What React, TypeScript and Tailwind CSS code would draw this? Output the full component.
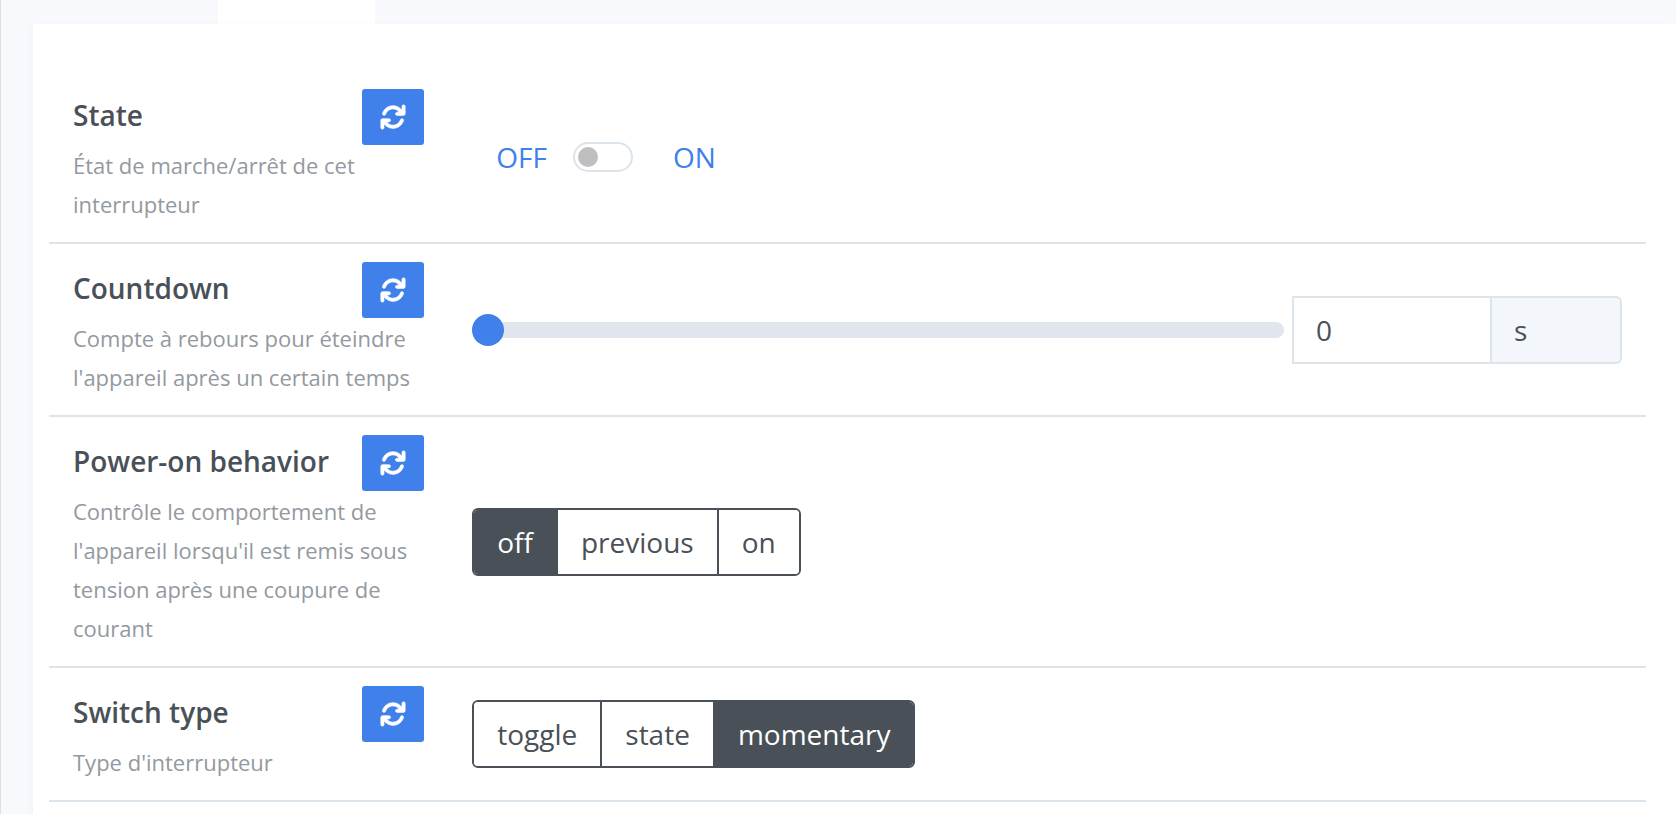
import React, { useState } from "react";

const RefreshIcon: React.FC = () => (
  <svg
    viewBox="0 0 512 512"
    className="size-[26px]"
    fill="currentColor"
    stroke="currentColor"
    strokeWidth="12"
    aria-hidden="true"
  >
    <path d="M464 16c-17.67 0-32 14.31-32 32v74.09C392.1 66.52 327.4 32 256 32C161.5 32 78.59 92.34 49.58 182.2c-5.438 16.81 3.797 34.88 20.61 40.28c16.89 5.5 34.88-3.812 40.3-20.59C130.9 138.5 189.4 96 256 96c50.5 0 96.26 24.55 124.4 64H336c-17.67 0-32 14.31-32 32s14.33 32 32 32h128c17.67 0 32-14.31 32-32V48C496 30.31 481.7 16 464 16z" />
    <path d="M441.8 289.6c-16.92-5.438-34.88 3.812-40.3 20.59C381.1 373.5 322.6 416 256 416c-50.5 0-96.25-24.55-124.4-64H176c17.67 0 32-14.31 32-32s-14.33-32-32-32h-128c-17.67 0-32 14.31-32 32v144c0 17.69 14.33 32 32 32s32-14.31 32-32v-74.09C119.9 445.5 184.6 480 256 480c94.45 0 177.4-60.34 206.4-150.2C467.9 313 458.6 294.1 441.8 289.6z" />
    <path d="M380 160L436 116V190H360zM132 352L76 396V322H152z" />
  </svg>
);

interface FeatureRowProps {
  label: string;
  description: string;
  children: React.ReactNode;
}

const FeatureRow: React.FC<FeatureRowProps> = ({
  label,
  description,
  children,
}) => (
  <div className="flex border-b-2 border-[#dce4ec] py-[18px]">
    <div className="w-1/4 px-6">
      <div className="flex h-[57px] items-start justify-between">
        <h2 className="text-[28px] leading-[52px] font-semibold whitespace-nowrap">
          {label}
        </h2>
        <button
          type="button"
          aria-label={`Refresh ${label}`}
          className="flex h-14 w-[62px] shrink-0 items-center justify-center rounded-[3px] bg-[#4080ea] text-white hover:bg-[#2f70dd]"
        >
          <RefreshIcon />
        </button>
      </div>
      <p className="text-[22px] leading-[39px] text-[#9399a0]">{description}</p>
    </div>
    <div className="flex w-3/4 items-center px-6">{children}</div>
  </div>
);

interface EnumEditorProps {
  label: string;
  values: string[];
  initial: string;
}

const EnumEditor: React.FC<EnumEditorProps> = ({ label, values, initial }) => {
  const [current, setCurrent] = useState<string>(initial);

  return (
    <div
      role="group"
      aria-label={label}
      className="flex overflow-hidden rounded-md border-2 border-[#495057]"
    >
      {values.map((value) => (
        <button
          key={value}
          type="button"
          aria-pressed={value === current}
          onClick={() => setCurrent(value)}
          className={`h-16 border-l-2 border-[#495057] px-[23px] text-[28px] first:border-l-0 ${
            value === current ? "bg-[#495057] text-white" : "bg-white"
          }`}
        >
          {value}
        </button>
      ))}
    </div>
  );
};

const StateEditor: React.FC = () => {
  const [on, setOn] = useState<boolean>(false);

  return (
    <div className="flex items-center text-[28px] text-[#4080ea]">
      <button type="button" className="pr-[26px] pl-6" onClick={() => setOn(false)}>
        OFF
      </button>
      <input
        type="checkbox"
        role="switch"
        aria-label="State"
        checked={on}
        onChange={(e) => setOn(e.target.checked)}
        className="flex h-[30px] w-[60px] appearance-none items-center rounded-full border-2 border-[#dce4ec] bg-white px-[3px] before:size-5 before:rounded-full before:bg-[#bfbfbf] checked:justify-end checked:bg-[#4080ea] checked:before:bg-white"
      />
      <button type="button" className="pl-10" onClick={() => setOn(true)}>
        ON
      </button>
    </div>
  );
};

const CountdownEditor: React.FC = () => {
  const [seconds, setSeconds] = useState<number>(0);

  return (
    <div className="flex w-full items-center gap-2">
      <input
        type="range"
        min={0}
        max={43200}
        aria-label="Countdown"
        value={seconds}
        onChange={(e) => setSeconds(Number(e.target.value))}
        className="h-8 min-w-0 flex-1 appearance-none bg-transparent [&::-webkit-slider-runnable-track]:h-4 [&::-webkit-slider-runnable-track]:rounded-full [&::-webkit-slider-runnable-track]:bg-[#e1e6ee] [&::-webkit-slider-thumb]:-mt-2 [&::-webkit-slider-thumb]:size-8 [&::-webkit-slider-thumb]:appearance-none [&::-webkit-slider-thumb]:rounded-full [&::-webkit-slider-thumb]:bg-[#4080ea]"
      />
      <div className="flex h-[68px] w-[330px] text-[28px]">
        <input
          type="number"
          aria-label="Countdown in seconds"
          value={seconds}
          onChange={(e) => setSeconds(Number(e.target.value))}
          className="w-[200px] border-2 border-[#dce4ec] bg-white px-[22px] [appearance:textfield]"
        />
        <span className="flex flex-1 items-center rounded-r-md border-2 border-l-0 border-[#dce4ec] bg-[#f3f6fa] px-[22px]">
          s
        </span>
      </div>
    </div>
  );
};

const App: React.FC = () => {
  return (
    <div className="min-h-screen border-l border-[#dcdfe3] bg-[#f8f9fd] pl-8 font-['Open_Sans',sans-serif] text-[#495057]">
      <div className="ml-[185px] h-6 w-[157px] bg-white" />
      <main className="min-h-[calc(100vh-24px)] bg-white pt-[47px] pr-[30px] pl-4 shadow-[0_4px_8px_rgba(60,70,100,0.06)]">
        <FeatureRow
          label="State"
          description="État de marche/arrêt de cet interrupteur"
        >
          <StateEditor />
        </FeatureRow>
        <FeatureRow
          label="Countdown"
          description="Compte à rebours pour éteindre l'appareil après un certain temps"
        >
          <CountdownEditor />
        </FeatureRow>
        <FeatureRow
          label="Power-on behavior"
          description="Contrôle le comportement de l'appareil lorsqu'il est remis sous tension après une coupure de courant"
        >
          <EnumEditor
            label="Power-on behavior"
            values={["off", "previous", "on"]}
            initial="off"
          />
        </FeatureRow>
        <FeatureRow label="Switch type" description="Type d'interrupteur">
          <EnumEditor
            label="Switch type"
            values={["toggle", "state", "momentary"]}
            initial="momentary"
          />
        </FeatureRow>
      </main>
    </div>
  );
};

export default App;
